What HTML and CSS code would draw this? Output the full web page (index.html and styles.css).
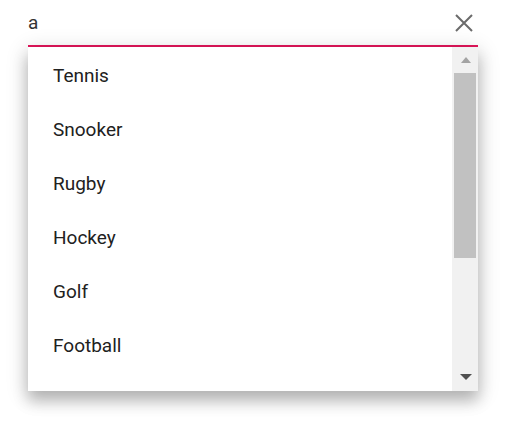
FILE: index.html
```html
<!DOCTYPE html>
<html lang="en">
<head>
  <meta charset="UTF-8">
  <meta name="viewport" content="width=device-width, initial-scale=1.0">
  <title>AutoComplete</title>
  <link rel="stylesheet" href="styles.css">
</head>
<body>
  <div class="autocomplete">
    <div class="input-row">
      <span class="input-text">a</span>
      <span class="clear-icon">
        <svg width="18" height="18" viewBox="0 0 18 18">
          <path d="M1 1 L17 17 M17 1 L1 17" stroke="#6b6b6b" stroke-width="2" fill="none"/>
        </svg>
      </span>
    </div>
    <div class="popup">
      <ul class="list">
        <li>Tennis</li>
        <li>Snooker</li>
        <li>Rugby</li>
        <li>Hockey</li>
        <li>Golf</li>
        <li>Football</li>
      </ul>
      <div class="scrollbar">
        <div class="arrow-box"><span class="arrow-up"></span></div>
        <div class="track">
          <div class="thumb"></div>
        </div>
        <div class="arrow-box"><span class="arrow-down"></span></div>
      </div>
    </div>
  </div>
</body>
</html>
```

FILE: styles.css
```css
body {
  margin: 0;
  padding-bottom: 60px;
  background-color: #ffffff;
  font-family: Roboto, "Liberation Sans", sans-serif;
}

.autocomplete {
  width: 450px;
  margin-left: 28px;
}

.input-row {
  display: flex;
  align-items: center;
  justify-content: space-between;
  height: 45px;
  border-bottom: 2px solid #e3165b;
}

.input-text {
  font-size: 19px;
  color: #333333;
  margin-top: -1px;
}

.clear-icon {
  display: flex;
  margin-right: 5px;
}

.popup {
  display: flex;
  height: 344px;
  background: #ffffff;
  box-shadow: 0 10px 14px rgba(0, 0, 0, 0.22), 0 4px 20px 2px rgba(0, 0, 0, 0.14);
}

.list {
  flex: 1;
  list-style: none;
  margin: 0;
  padding: 2px 0 0 0;
  overflow: hidden;
}

.list li {
  height: 54px;
  line-height: 54px;
  padding-left: 25px;
  font-size: 19px;
  color: #212121;
}

.scrollbar {
  width: 26px;
  display: flex;
  flex-direction: column;
  background-color: #f1f1f1;
}

.arrow-box {
  height: 26px;
  display: flex;
  align-items: center;
  justify-content: center;
}

.arrow-up {
  width: 0;
  height: 0;
  border-left: 5px solid transparent;
  border-right: 5px solid transparent;
  border-bottom: 6px solid #a3a3a3;
  margin-left: 1px;
}

.arrow-down {
  width: 0;
  height: 0;
  border-left: 6px solid transparent;
  border-right: 6px solid transparent;
  border-top: 6px solid #505050;
  margin-top: -2px;
  margin-left: 1px;
}

.track {
  flex: 1;
  padding: 0 2px;
}

.thumb {
  height: 185px;
  background-color: #c1c1c1;
}
```
